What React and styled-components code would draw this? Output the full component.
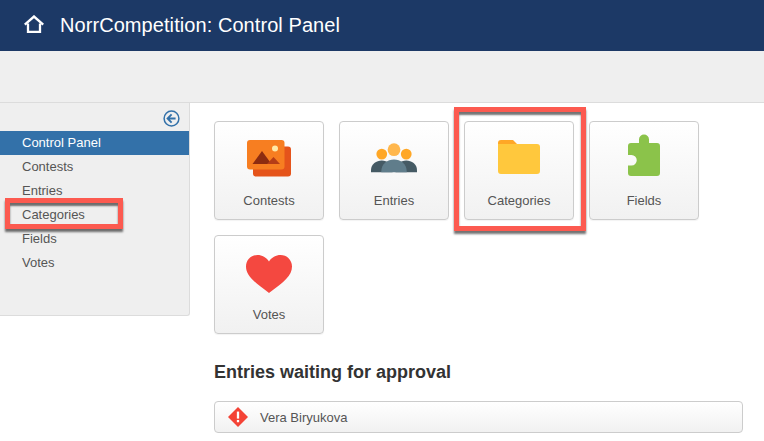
import React from "react";
import styled, { createGlobalStyle } from "styled-components";

const Global = createGlobalStyle`
  html, body { margin: 0; padding: 0; background: #fff; }
  body { font-family: "Liberation Sans", Arial, sans-serif; overflow: hidden; }
  * { box-sizing: border-box; }
`;

const Page = styled.div`
  width: 764px;
  height: 441px;
  overflow: hidden;
  display: flex;
  flex-direction: column;
`;
const Header = styled.header`
  height: 51px;
  flex: none;
  background: #1c3966;
  color: #fff;
  display: flex;
  align-items: center;
  gap: 16px;
  padding: 0 0 0 24px;
  font-size: 20px;
  letter-spacing: 0.07px;
`;
const HomeWrap = styled.div`
  display: flex;
  margin-top: -4px;
`;
const Toolbar = styled.div`
  height: 52px;
  flex: none;
  background: #efefef;
  border-bottom: 1px solid #dcdcdc;
`;
const Body = styled.div`
  flex: 1;
  display: flex;
  align-items: flex-start;
`;
const Sidebar = styled.aside`
  width: 190px;
  height: 213px;
  flex: none;
  background: #efefef;
  border-right: 1px solid #dcdcdc;
  border-bottom: 1px solid #dcdcdc;
  border-bottom-right-radius: 3px;
  padding-top: 5px;
`;
const Collapse = styled.div`
  height: 23px;
  display: flex;
  justify-content: flex-end;
  padding: 2px 9px 0 0;
`;
const NavItem = styled.div`
  position: relative;
  height: 24px;
  line-height: 24px;
  padding-left: 22px;
  font-size: 13px;
  color: ${p => (p.$active ? "#fff" : "#555")};
  background: ${p => (p.$active ? "#3371a9" : "transparent")};
`;
const Callout = styled.div`
  position: absolute;
  border: 5px solid #fc5a50;
  box-shadow: 0 3px 2px rgba(0, 0, 0, 0.55), inset 0 3px 2px rgba(0, 0, 0, 0.55);
  pointer-events: none;
`;
const NavCallout = styled(Callout)`
  left: 5px;
  top: -5px;
  width: 118px;
  height: 31px;
`;
const TileCallout = styled(Callout)`
  left: -11px;
  top: -15px;
  right: -13px;
  bottom: -12px;
`;
const Main = styled.main`
  flex: 1;
  padding: 18px 21px 0 24px;
`;
const Tiles = styled.div`
  display: grid;
  grid-template-columns: repeat(4, 110px);
  grid-auto-rows: 99px;
  gap: 15px;
`;
const Tile = styled.div`
  position: relative;
  border: 1px solid #ccc;
  border-radius: 4px;
  background: linear-gradient(#fff, #f1f1f1);
  display: flex;
  flex-direction: column;
  align-items: center;
  box-shadow: 0 1px 1px rgba(0, 0, 0, 0.05);
`;
const TileIcon = styled.div`
  height: 53px;
  margin-top: 13px;
  padding-bottom: ${p => p.$lift}px;
  display: flex;
  align-items: center;
  justify-content: center;
  svg { flex: none; }
`;
const TileLabel = styled.div`
  margin-top: 5px;
  font-size: 13px;
  line-height: 15px;
  color: #555;
`;
const Heading = styled.h2`
  margin: 27px 0 0;
  font-size: 18px;
  line-height: 22px;
  font-weight: 700;
  color: #333;
`;
const EntryRow = styled.div`
  margin-top: 18px;
  height: 32px;
  border: 1px solid #ccc;
  border-radius: 4px;
  background: linear-gradient(#fff, #f1f1f1);
  display: flex;
  align-items: center;
  gap: 12px;
  padding-left: 13px;
  font-size: 13px;
  color: #555;
`;

const HomeIcon = () => (
  <svg width="20" height="18" viewBox="0 0 20 18">
    <path d="M.8 9.600 10 1.500l9.200 8.100" fill="none" stroke="#fff" strokeWidth="2.400" />
    <path d="M4 8.600v8.200h12V8.600" fill="none" stroke="#fff" strokeWidth="2.300" />
  </svg>
);
const BackIcon = () => (
  <svg width="17" height="17" viewBox="0 0 17 17">
    <circle cx="8.500" cy="8.500" r="7.400" fill="none" stroke="#3371a9" strokeWidth="1.500" />
    <path d="M8.600 4.400 4.600 8.500l4 4.100M4.800 8.500h7.800" fill="none" stroke="#3371a9" strokeWidth="1.900" />
  </svg>
);
const PictureIcon = () => (
  <svg width="44" height="37" viewBox="0 0 44 37">
    <rect x="6" y="6.500" width="38" height="30" rx="3" fill="#e5541b" />
    <rect x="0" y="0" width="37.500" height="29.500" rx="3" fill="#f77e21" />
    <path d="M5.500 24 15 11l9.500 13z" fill="#8d2c10" />
    <path d="M20 24 26.500 17l6.500 7z" fill="#b53d17" />
    <circle cx="28" cy="8.500" r="3" fill="#ffe9a8" />
  </svg>
);
const PeopleIcon = () => (
  <svg width="46" height="30" viewBox="0 0 47 30">
    <circle cx="11" cy="11" r="5.500" fill="#ffa726" />
    <circle cx="36" cy="11" r="5.500" fill="#ffa726" />
    <path d="M0 29.500v-2C0 21 5.500 17.500 11 17.500S22 21 22 27.500v2z" fill="#455a64" />
    <path d="M25 29.500v-2c0-6.500 5.500-10 11-10s11 3.500 11 10v2z" fill="#455a64" />
    <circle cx="23.500" cy="6.500" r="6.500" fill="#ffb74d" />
    <path d="M10.500 29.500v-1C10.500 21 17 16.500 23.500 16.500S36.500 21 36.500 28.500v1z" fill="#607d8b" />
  </svg>
);
const FolderIcon = () => (
  <svg width="42" height="34" viewBox="0 0 42 34">
    <path d="M3 0h12l5 5H0V3a3 3 0 0 1 3-3z" fill="#ffa726" />
    <path d="M3 4h36a3 3 0 0 1 3 3v24a3 3 0 0 1-3 3H3a3 3 0 0 1-3-3V3.500c0 .5 1 .5 3 .5z" fill="#ffc83d" />
  </svg>
);
const PuzzleIcon = () => (
  <svg width="32" height="42" viewBox="0 0 32 42">
    <path
      fillRule="evenodd"
      d="M11 9V5.500a5 5 0 1 1 10 0V9h8a3 3 0 0 1 3 3v27a3 3 0 0 1-3 3H3a3 3 0 0 1-3-3V31.500h3.500a5 5 0 0 0 0-10.500H0V12a3 3 0 0 1 3-3z"
      fill="#8bc34a"
    />
  </svg>
);
const HeartIcon = () => (
  <svg width="46" height="38" viewBox="0 0 46 38">
    <path
      d="M23 38C8 27 0 20.500 0 11.500 0 4.800 5.200 0 11.500 0 16 0 20.500 2.400 23 6.500 25.500 2.400 30 0 34.500 0 40.800 0 46 4.800 46 11.500 46 20.500 38 27 23 38z"
      fill="#f44840"
    />
  </svg>
);
const AlertIcon = () => (
  <svg width="20" height="20" viewBox="0 0 21 21">
    <path d="M10.500 0 21 10.500 10.500 21 0 10.500z" fill="#f44336" />
    <rect x="9.300" y="4.800" width="2.400" height="7.400" fill="#fff" />
    <rect x="9.300" y="13.600" width="2.400" height="2.400" fill="#fff" />
  </svg>
);

const nav = ["Control Panel", "Contests", "Entries", "Categories", "Fields", "Votes"];
const tiles = [
  { label: "Contests", icon: <PictureIcon />, lift: 6 },
  { label: "Entries", icon: <PeopleIcon />, lift: 7 },
  { label: "Categories", icon: <FolderIcon />, lift: 9 },
  { label: "Fields", icon: <PuzzleIcon />, lift: 13 },
  { label: "Votes", icon: <HeartIcon />, lift: 3 },
];

export default function App() {
  return (
    <Page>
      <Global />
      <Header>
        <HomeWrap>
          <HomeIcon />
        </HomeWrap>
        <span>NorrCompetition: Control Panel</span>
      </Header>
      <Toolbar />
      <Body>
        <Sidebar>
          <Collapse>
            <BackIcon />
          </Collapse>
          {nav.map((n, i) => (
            <NavItem key={n} $active={i === 0}>
              {n}
              {n === "Categories" && <NavCallout />}
            </NavItem>
          ))}
        </Sidebar>
        <Main>
          <Tiles>
            {tiles.map(({ label, icon, lift }) => (
              <Tile key={label}>
                <TileIcon $lift={lift}>{icon}</TileIcon>
                <TileLabel>{label}</TileLabel>
                {label === "Categories" && <TileCallout />}
              </Tile>
            ))}
          </Tiles>
          <Heading>Entries waiting for approval</Heading>
          <EntryRow>
            <AlertIcon />
            <span>Vera Biryukova</span>
          </EntryRow>
        </Main>
      </Body>
    </Page>
  );
}
